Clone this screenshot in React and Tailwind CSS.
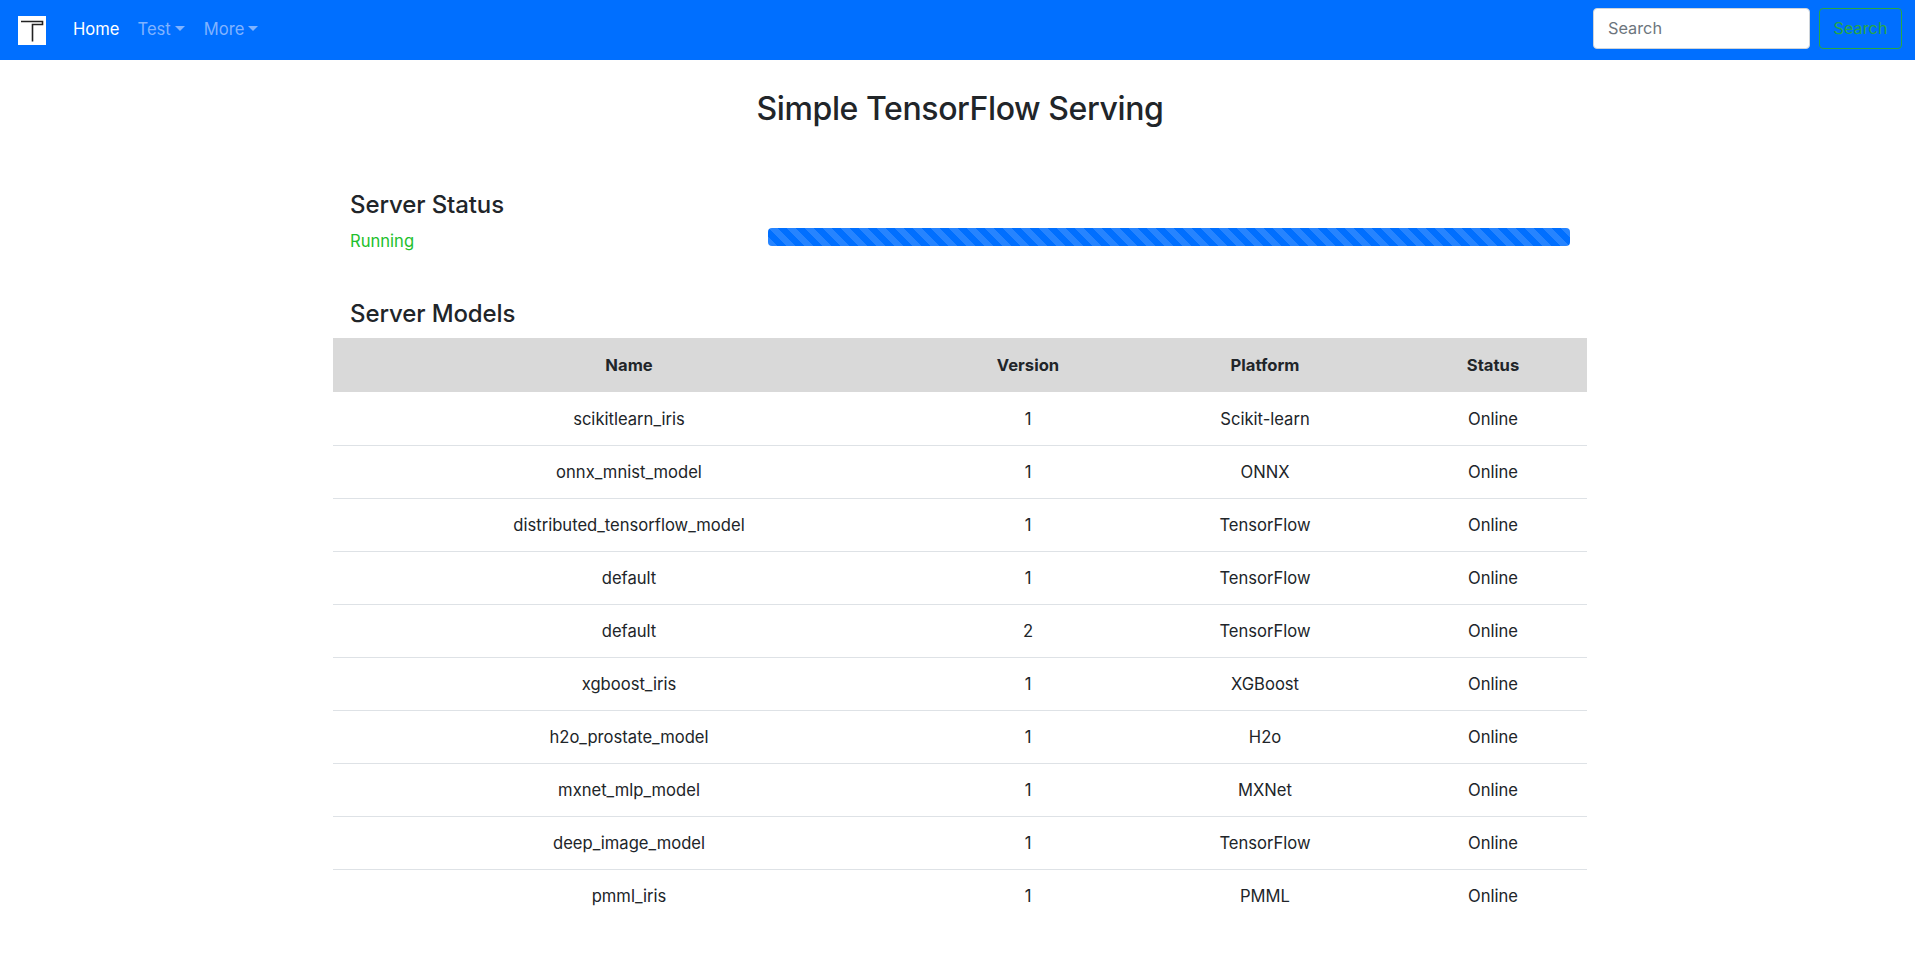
const rows = [
  ["scikitlearn_iris", "1", "Scikit-learn"],
  ["onnx_mnist_model", "1", "ONNX"],
  ["distributed_tensorflow_model", "1", "TensorFlow"],
  ["default", "1", "TensorFlow"],
  ["default", "2", "TensorFlow"],
  ["xgboost_iris", "1", "XGBoost"],
  ["h2o_prostate_model", "1", "H2o"],
  ["mxnet_mlp_model", "1", "MXNet"],
  ["deep_image_model", "1", "TensorFlow"],
  ["pmml_iris", "1", "PMML"],
];

function Caret() {
  return <span className="ml-[4px] mb-[2px] inline-block border-x-[5.5px] border-t-[5px] border-x-transparent border-t-[#80b3ff]" />;
}

export default function App() {
  return (
    <div className="min-h-[958px] bg-white font-['Inter','Liberation_Sans',sans-serif] text-[16.6px] text-[#212529]">
      <nav className="flex h-[60px] items-start bg-[#006fff] pl-[18px] pr-[13px]">
        <svg className="mt-[16px] mr-[27px] block" width="28" height="29" viewBox="0 0 28 29">
          <rect width="28" height="29" fill="#fff" />
          <path d="M3 5.5H24.5V8.5H14.5V25.5" fill="none" stroke="#222" strokeWidth="1.6" />
        </svg>
        <a className="mt-[17px] mr-[18px] leading-[24px] text-white">Home</a>
        <a className="mt-[17px] mr-[19px] flex items-center leading-[24px] text-[#80b3ff]">Test<Caret /></a>
        <a className="mt-[17px] flex items-center leading-[24px] text-[#80b3ff]">More<Caret /></a>
        <div className="mt-[8px] ml-auto flex items-center gap-[9px] text-[16.3px]">
          <div className="flex h-[41px] w-[217px] items-center rounded-[4px] border border-[#ced4da] bg-white px-[14px] text-[#6c757d]">Search</div>
          <button className="h-[41px] w-[83px] rounded-[4px] border border-[#28a745] text-center text-[#28a745]">Search</button>
        </div>
      </nav>
      <main className="ml-[333px] w-[1254px]">
        <h1 className="pt-[23px] text-center text-[32px] leading-[52px] font-medium tracking-[-0.4px]">Simple TensorFlow Serving</h1>
        <section className="mt-[55px] flex px-[17px]">
          <div className="w-[418px]">
            <h2 className="text-[24px] leading-[29px] font-medium tracking-[-0.1px]">Server Status</h2>
            <p className="mt-[10px] leading-[24px] text-[#22c02c]">Running</p>
          </div>
          <div className="mt-[38px] h-[18px] w-[803px] rounded-[4px] bg-[#006fff] bg-[linear-gradient(45deg,rgba(255,255,255,0.15)_25%,transparent_25%,transparent_50%,rgba(255,255,255,0.15)_50%,rgba(255,255,255,0.15)_75%,transparent_75%,transparent)] bg-[length:18px_18px]" />
        </section>
        <h2 className="mt-[46px] px-[17px] text-[24px] leading-[29px] font-medium tracking-[-0.1px]">Server Models</h2>
        <table className="mt-[10px] w-full table-fixed border-collapse text-center">
          <thead>
            <tr className="h-[54px] bg-[#d9d9d9] font-bold">
              <th className="w-[592px]">Name</th>
              <th className="w-[206px]">Version</th>
              <th className="w-[268px]">Platform</th>
              <th className="w-[188px]">Status</th>
            </tr>
          </thead>
          <tbody>
            {rows.map((r, i) => (
              <tr key={i} className="h-[53px] border-b border-[#dee2e6] last:border-b-0">
                <td className="pt-[2px]">{r[0]}</td>
                <td className="pt-[2px]">{r[1]}</td>
                <td className="pt-[2px]">{r[2]}</td>
                <td className="pt-[2px]">Online</td>
              </tr>
            ))}
          </tbody>
        </table>
      </main>
    </div>
  );
}
